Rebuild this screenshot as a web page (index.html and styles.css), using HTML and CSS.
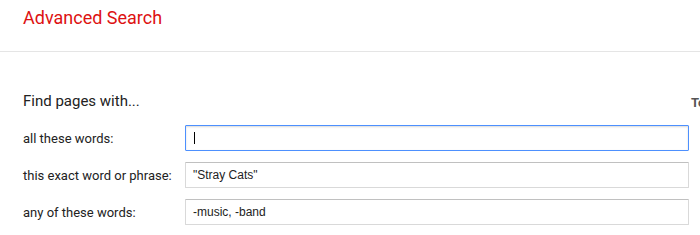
FILE: index.html
```html
<!DOCTYPE html>
<html lang="en">
<head>
    <meta charset="UTF-8">
    <meta name="viewport" content="width=device-width, initial-scale=1.0">
    <title>Advanced Search</title>
    <link rel="stylesheet" href="styles.css">
</head>
<body>
    <header class="page-header">
        <h1 class="page-title">Advanced Search</h1>
    </header>
    <main class="search-form">
        <h2 class="section-title">Find pages with...</h2>
        <div class="section-hint">To do this in the search box.</div>

        <label class="field-label" for="q-all">all these words:</label>
        <span class="field field-focus">
            <input id="q-all" class="field-input" type="text" value="">
            <span class="caret"></span>
        </span>
        <div class="field-hint"></div>

        <label class="field-label" for="q-exact">this exact word or phrase:</label>
        <span class="field">
            <input id="q-exact" class="field-input" type="text" value="&quot;Stray Cats&quot;">
        </span>
        <div class="field-hint"></div>

        <label class="field-label" for="q-any">any of these words:</label>
        <span class="field">
            <input id="q-any" class="field-input" type="text" value="-music, -band">
        </span>
        <div class="field-hint"></div>
    </main>
</body>
</html>
```

FILE: styles.css
```css
body {
    margin: 0;
    background-color: #fff;
    font-family: Roboto, "Liberation Sans", Arial, sans-serif;
    color: #222;
    overflow: hidden;
}

.page-header {
    height: 51px;
    border-bottom: 1px solid #e5e5e5;
    padding-left: 23px;
}

.page-title {
    margin: 0;
    padding-top: 6px;
    font-size: 18px;
    line-height: 24px;
    font-weight: 400;
    color: #dd1111;
}

.search-form {
    display: grid;
    grid-template-columns: 162px 504px 200px;
    row-gap: 11px;
    padding: 39px 0 0 23px;
    align-items: center;
}

.section-title {
    grid-column: 1 / 3;
    margin: 0 0 3px 0;
    font-size: 15px;
    line-height: 20px;
    font-weight: 400;
    color: #222;
}

.section-hint {
    padding-left: 2px;
    font-size: 13px;
    font-weight: 700;
    color: #555;
    white-space: nowrap;
}

.field-label {
    font-size: 13px;
    color: #222;
}

.field {
    position: relative;
    display: block;
    height: 26px;
}

.field-input {
    box-sizing: border-box;
    width: 100%;
    height: 26px;
    margin: 0;
    padding: 0 7px;
    border: 1px solid #d9d9d9;
    border-top-color: #c0c0c0;
    border-radius: 1px;
    font-family: "Liberation Sans", Arial, sans-serif;
    font-size: 12px;
    color: #222;
    outline: none;
}

.field-focus .field-input {
    border: 1px solid #4d90fe;
    box-shadow: inset 0 1px 2px rgba(0, 0, 0, 0.15);
}

.caret {
    position: absolute;
    left: 9px;
    top: 7px;
    width: 1px;
    height: 12px;
    background-color: #000;
}
```
